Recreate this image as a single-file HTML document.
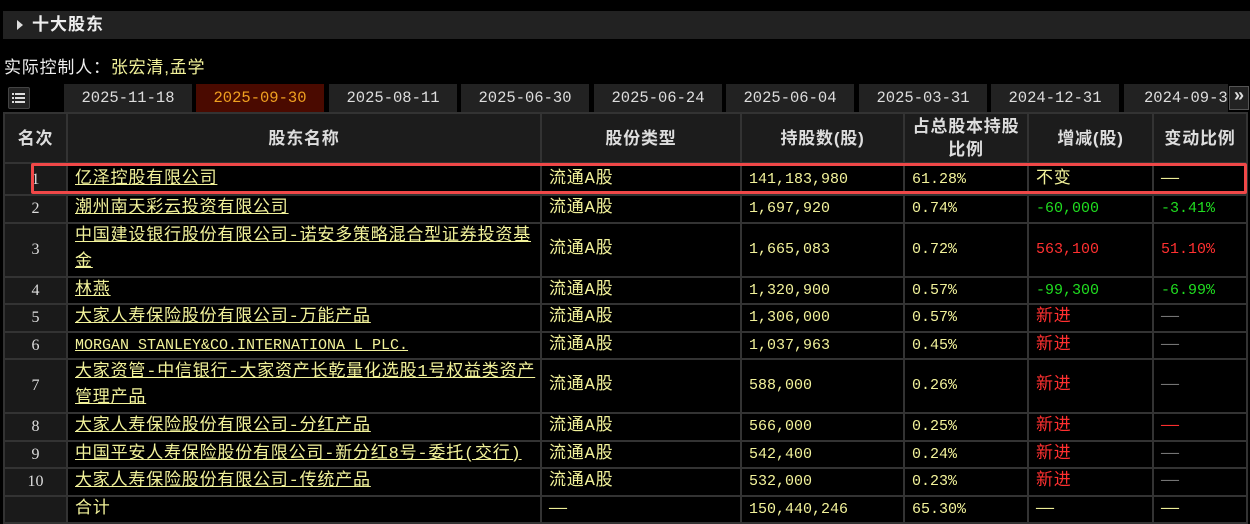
<!DOCTYPE html>
<html><head><meta charset="utf-8"><style>
body{margin:0;background:#000;width:1250px;height:524px;overflow:hidden;font-family:"Liberation Mono","Noto Sans CJK SC",monospace;color:#f2f29a;}
.hdr{position:absolute;left:3px;top:11px;width:1247px;height:28px;background:#222;color:#eee;font-size:17px;font-weight:bold;font-family:"Liberation Sans","Noto Sans CJK SC",sans-serif;line-height:28px;}
.hdr .tri{position:absolute;left:14px;top:9px;width:0;height:0;border-left:6px solid #ddd;border-top:5px solid transparent;border-bottom:5px solid transparent;}
.hdr span.t{position:absolute;left:29px;letter-spacing:1px;}
.ctl{position:absolute;left:4px;top:53px;font-size:17px;letter-spacing:0.8px;font-family:"Liberation Sans","Noto Sans CJK SC",sans-serif;color:#eee;}
.ctl b{font-weight:normal;color:#f2f29a;}
.tab{position:absolute;top:84px;height:28px;background:#222;color:#ddd;font-size:15.5px;line-height:28px;text-align:center;}
.tab.on{background:#4a0a00;color:#f0a020;}
.icon{position:absolute;left:8px;top:87px;width:20px;height:20px;background:#222;border:1px solid #444;border-radius:2px;}
.icon i{position:absolute;left:6px;width:10px;height:2px;background:#ddd;}
.icon i:before{content:"";position:absolute;left:-3px;top:0;width:2px;height:2px;background:#ddd;}
table{position:absolute;left:3px;top:112px;border-collapse:collapse;table-layout:fixed;}
td,th{border:2px solid #333;padding:0 0 0 7px;font-size:16px;height:25.5px;line-height:25px;}
th{background:#1c1c1c;color:#ddd;font-weight:bold;text-align:center;padding:0;height:48px;line-height:23px;font-family:"Liberation Sans","Noto Sans CJK SC",sans-serif;font-size:17px;letter-spacing:0.8px;}
td.r{background:#1a1a1a;color:#ddd;text-align:center;padding:0;font-family:"Liberation Serif",serif;}
td.nm{font-size:17px;letter-spacing:0.8px;}
.n{font-size:15px;}
.g{color:#20dd20;}.rd{color:#ff3030;}
.dbl td{height:52px;line-height:26px;}
tr.first td{height:30px;}
.hl{position:absolute;left:31px;top:163px;width:1210px;height:25px;border:3px solid #f04848;border-radius:2px;}
.d{font-size:15px;}
</style></head><body>
<div class="hdr"><div class="tri"></div><span class="t">十大股东</span></div>
<div class="ctl">实际控制人：<b>张宏清,孟学</b></div>
<div class="icon"><i style="top:5px"></i><i style="top:9px"></i><i style="top:13px"></i></div>
<div class="tab" style="left:64px;width:128px">2025-11-18</div>
<div class="tab on" style="left:196px;width:128px">2025-09-30</div>
<div class="tab" style="left:329px;width:128px">2025-08-11</div>
<div class="tab" style="left:461px;width:128px">2025-06-30</div>
<div class="tab" style="left:594px;width:128px">2025-06-24</div>
<div class="tab" style="left:726px;width:128px">2025-06-04</div>
<div class="tab" style="left:859px;width:128px">2025-03-31</div>
<div class="tab" style="left:991px;width:128px">2024-12-31</div>
<div class="tab" style="left:1124px;width:104px;text-align:left;padding-left:20px;box-sizing:border-box;white-space:nowrap;overflow:hidden">2024-09-3</div>
<div class="tab" style="left:1229px;top:86px;height:24px;width:20px;line-height:20px;border:1px solid #555;box-sizing:border-box;font-size:18px;font-weight:bold">»</div>
<table>
<colgroup><col style="width:63px"><col style="width:474px"><col style="width:200px"><col style="width:163px"><col style="width:124px"><col style="width:125px"><col style="width:94px"></colgroup>
<tr><th>名次</th><th>股东名称</th><th>股份类型</th><th>持股数(股)</th><th>占总股本持股<br>比例</th><th>增减(股)</th><th>变动比例</th></tr>
<tr class="first"><td class="r">1</td><td class="nm"><u>亿泽控股有限公司</u></td><td class="nm">流通A股</td><td class="n">141,183,980</td><td class="n">61.28%</td><td class="nm">不变</td><td class="d">──</td></tr>
<tr><td class="r">2</td><td class="nm"><u>潮州南天彩云投资有限公司</u></td><td class="nm">流通A股</td><td class="n">1,697,920</td><td class="n">0.74%</td><td class="n g">-60,000</td><td class="n g">-3.41%</td></tr>
<tr class="dbl"><td class="r">3</td><td class="nm"><u>中国建设银行股份有限公司-诺安多策略混合型证券投资基金</u></td><td class="nm">流通A股</td><td class="n">1,665,083</td><td class="n">0.72%</td><td class="n rd">563,100</td><td class="n rd">51.10%</td></tr>
<tr><td class="r">4</td><td class="nm"><u>林燕</u></td><td class="nm">流通A股</td><td class="n">1,320,900</td><td class="n">0.57%</td><td class="n g">-99,300</td><td class="n g">-6.99%</td></tr>
<tr><td class="r">5</td><td class="nm"><u>大家人寿保险股份有限公司-万能产品</u></td><td class="nm">流通A股</td><td class="n">1,306,000</td><td class="n">0.57%</td><td class="nm rd">新进</td><td class="d" style="color:#777">──</td></tr>
<tr><td class="r">6</td><td class="n"><u>MORGAN STANLEY&amp;CO.INTERNATIONA L PLC.</u></td><td class="nm">流通A股</td><td class="n">1,037,963</td><td class="n">0.45%</td><td class="nm rd">新进</td><td class="d" style="color:#777">──</td></tr>
<tr class="dbl"><td class="r">7</td><td class="nm"><u>大家资管-中信银行-大家资产长乾量化选股1号权益类资产管理产品</u></td><td class="nm">流通A股</td><td class="n">588,000</td><td class="n">0.26%</td><td class="nm rd">新进</td><td class="d" style="color:#777">──</td></tr>
<tr><td class="r">8</td><td class="nm"><u>大家人寿保险股份有限公司-分红产品</u></td><td class="nm">流通A股</td><td class="n">566,000</td><td class="n">0.25%</td><td class="nm rd">新进</td><td class="d rd">──</td></tr>
<tr><td class="r">9</td><td class="nm"><u>中国平安人寿保险股份有限公司-新分红8号-委托(交行)</u></td><td class="nm">流通A股</td><td class="n">542,400</td><td class="n">0.24%</td><td class="nm rd">新进</td><td class="d" style="color:#777">──</td></tr>
<tr><td class="r">10</td><td class="nm"><u>大家人寿保险股份有限公司-传统产品</u></td><td class="nm">流通A股</td><td class="n">532,000</td><td class="n">0.23%</td><td class="nm rd">新进</td><td class="d" style="color:#777">──</td></tr>
<tr><td class="r"></td><td class="nm">合计</td><td class="d">──</td><td class="n">150,440,246</td><td class="n">65.30%</td><td class="d">──</td><td class="d">──</td></tr>
</table>
<div class="hl"></div>
</body></html>
